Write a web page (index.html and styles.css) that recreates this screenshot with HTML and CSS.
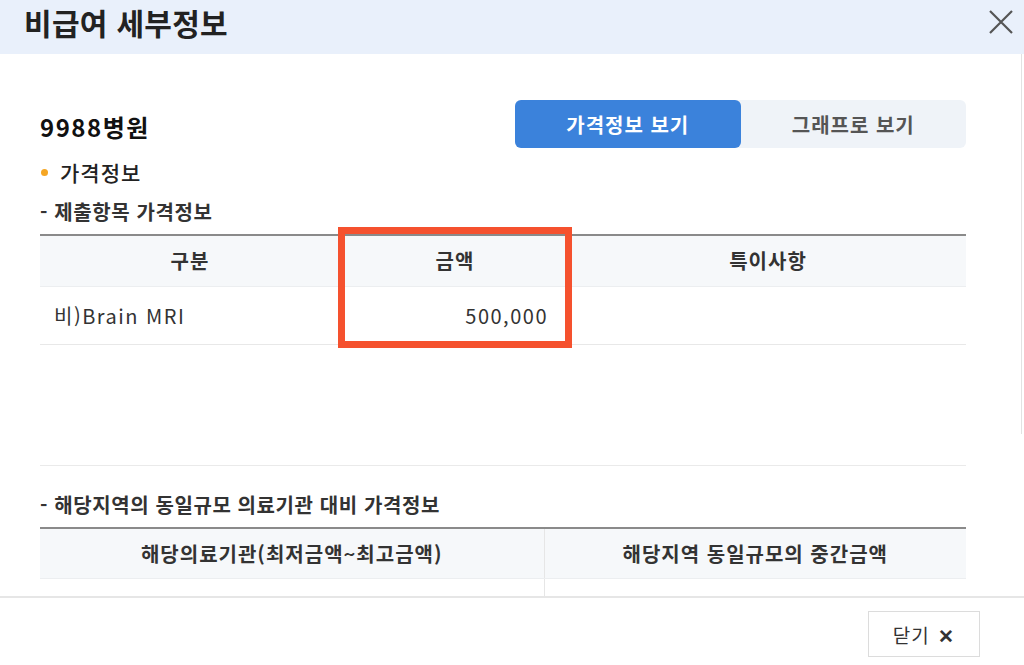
FILE: index.html
```html
<!DOCTYPE html>
<html lang="ko">
<head>
    <meta charset="UTF-8">
    <meta name="viewport" content="width=device-width, initial-scale=1.0">
    <title>비급여 세부정보</title>
    <link rel="stylesheet" href="styles.css">
</head>
<body>
    <div class="modal">
        <header class="modal-head">
            <h2 class="modal-title">비급여 세부정보</h2>
            <button class="btn-close" aria-label="닫기">
                <svg width="26" height="24" viewBox="0 0 26 24">
                    <path d="M2 1 L24 23 M24 1 L2 23" stroke="#555" stroke-width="2.2" fill="none"/>
                </svg>
            </button>
        </header>

        <div class="modal-body">
            <div class="top-row">
                <h3 class="hosp-name">9988병원</h3>
                <div class="tabs">
                    <button class="tab on">가격정보 보기</button>
                    <button class="tab">그래프로 보기</button>
                </div>
            </div>

            <p class="dot-title">가격정보</p>
            <p class="sub-title">- 제출항목 가격정보</p>

            <div class="tbl-wrap">
                <table class="tbl">
                    <colgroup>
                        <col style="width: 300px">
                        <col style="width: 230px">
                        <col>
                    </colgroup>
                    <thead>
                        <tr>
                            <th>구분</th>
                            <th>금액</th>
                            <th>특이사항</th>
                        </tr>
                    </thead>
                    <tbody>
                        <tr>
                            <td class="left">비)Brain MRI</td>
                            <td class="right">500,000</td>
                            <td></td>
                        </tr>
                    </tbody>
                </table>
                <div class="highlight"></div>
            </div>

            <div class="empty-area"></div>

            <p class="sub-title second">- 해당지역의 동일규모 의료기관 대비 가격정보</p>

            <table class="tbl tbl2">
                <colgroup>
                    <col style="width: 504px">
                    <col>
                </colgroup>
                <thead>
                    <tr>
                        <th>해당의료기관(최저금액~최고금액)</th>
                        <th>해당지역 동일규모의 중간금액</th>
                    </tr>
                </thead>
                <tbody>
                    <tr>
                        <td></td>
                        <td></td>
                    </tr>
                </tbody>
            </table>
        </div>

        <footer class="modal-foot">
            <button class="btn-foot">닫기 <span class="x">✕</span></button>
        </footer>
    </div>
</body>
</html>
```

FILE: styles.css
```css
* {
    box-sizing: border-box;
}

body {
    margin: 0;
    font-family: "Noto Sans CJK KR", "Noto Sans", sans-serif;
    color: #333;
    background: #fff;
}

.modal {
    width: 1024px;
    height: 665px;
    display: flex;
    flex-direction: column;
    overflow: hidden;
}

.modal-head {
    height: 54px;
    flex: none;
    background: #e9f0fb;
    display: flex;
    justify-content: space-between;
    align-items: flex-start;
    padding: 0 10px 0 24px;
}

.modal-title {
    margin: 0;
    font-size: 30px;
    line-height: 44px;
    font-weight: 700;
    letter-spacing: 0.3px;
    color: #222;
}

.btn-close {
    margin-top: 10px;
    padding: 0;
    border: none;
    background: none;
    width: 26px;
    height: 24px;
    cursor: pointer;
}

.btn-close svg {
    display: block;
}

.modal-body {
    flex: none;
    height: 542px;
    overflow: hidden;
    position: relative;
    padding: 0 58px 0 40px;
}

.modal-body::after {
    content: '';
    position: absolute;
    top: 0;
    right: 2px;
    height: 380px;
    border-left: 1px solid #e2e2e2;
}

.top-row {
    display: flex;
    justify-content: space-between;
    align-items: center;
    padding-top: 46px;
}

.hosp-name {
    margin: 4px 0 0;
    font-size: 24px;
    font-weight: 700;
    letter-spacing: 1.5px;
    color: #111;
}

.tabs {
    display: flex;
    width: 451px;
    background: #eff3f8;
    border-radius: 6px;
}

.tab {
    flex: 1;
    height: 48px;
    border: none;
    background: none;
    font-family: inherit;
    font-size: 20px;
    font-weight: 700;
    letter-spacing: 1px;
    color: #555;
    border-radius: 6px;
    cursor: pointer;
}

.tab.on {
    background: #3b82db;
    color: #fff;
}

.dot-title {
    margin: 10px 0 0;
    padding-left: 20px;
    position: relative;
    font-size: 21px;
    line-height: 28px;
    font-weight: 500;
    letter-spacing: 1px;
    color: #222;
}

.dot-title::before {
    content: '';
    position: absolute;
    left: 1px;
    top: 11px;
    width: 7px;
    height: 7px;
    border-radius: 50%;
    background: #f5a623;
}

.sub-title {
    margin: 13px 0 9px;
    font-size: 20px;
    line-height: 26px;
    font-weight: 700;
    letter-spacing: 0.6px;
    color: #333;
}

.sub-title.second {
    margin-top: 26px;
}

.tbl-wrap {
    position: relative;
}

.tbl {
    width: 100%;
    border-collapse: collapse;
    table-layout: fixed;
    border-top: 2px solid #8a8a8a;
}

.tbl th {
    height: 51px;
    background: #f6f8fa;
    font-size: 20px;
    font-weight: 700;
    letter-spacing: 1px;
    color: #333;
    border-bottom: 1px solid #eceef0;
}

.tbl td {
    height: 58px;
    font-size: 20px;
    letter-spacing: 1.5px;
    color: #333;
    border-bottom: 1px solid #e8e8e8;
}

.tbl td.left {
    padding-left: 14px;
}

.tbl td.right {
    text-align: right;
    padding-right: 22px;
}

.tbl2 th + th,
.tbl2 td + td {
    border-left: 1px solid #e6e6e6;
}

.highlight {
    position: absolute;
    left: 298px;
    top: -7px;
    width: 234px;
    height: 121px;
    border: 7px solid #f5512e;
}

.empty-area {
    height: 121px;
    border-bottom: 1px solid #eaeaea;
}

.modal-foot {
    flex: none;
    border-top: 2px solid #e6e6e6;
    display: flex;
    justify-content: flex-end;
    padding: 13px 44px 0 0;
}

.btn-foot {
    width: 112px;
    height: 46px;
    border: 1px solid #dcdcdc;
    background: #fff;
    font-family: inherit;
    font-size: 19px;
    letter-spacing: 1px;
    color: #333;
    cursor: pointer;
}

.btn-foot .x {
    font-weight: 700;
    margin-left: 2px;
}
```
